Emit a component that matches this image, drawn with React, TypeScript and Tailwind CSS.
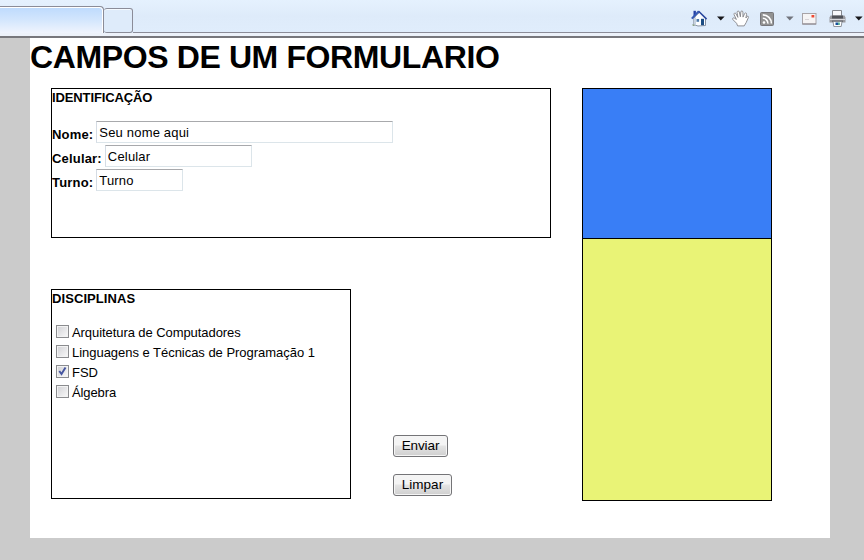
import type { ReactNode } from "react";

function Caret({ color }: { color: string }) {
  return (
    <svg width="8" height="5" viewBox="0 0 8 5" className="shrink-0">
      <path d="M0 0.5h7.6L3.8 4.5z" fill={color} />
    </svg>
  );
}

function HomeIcon() {
  return (
    <svg width="17" height="17" viewBox="0 0 17 17">
      <path d="M2.5 .8h2.4v5H2.5z" fill="#2440a4" />
      <path d="M2.5 9L5 5.5 8.5 2.5 14.5 8.5V15.5L7 16l-4.5-1.5z" fill="#fbfdff" stroke="#7c8798" strokeWidth=".9" />
      <path d="M2.5 9.5L5 7v8.3l-2.5-.8z" fill="#c7d2df" />
      <path d="M.8 8.6L7.8 1.2" fill="none" stroke="#3458b4" strokeWidth="2" />
      <path d="M7.6 1.3l8 7.8" fill="none" stroke="#2a479f" strokeWidth="1.6" />
      <path d="M10 8.8h3V15.2h-3z" fill="#1b4c83" />
      <path d="M5.5 9h2.6v2.8H5.5z" fill="#4c78a8" />
      <path d="M1 14.5h2.5v1.5H2z" fill="#8ca283" />
    </svg>
  );
}

function HandIcon() {
  return (
    <svg width="17" height="17" viewBox="0 0 17 17">
      <path
        d="M5.6 15.9L4.6 13.3 .9 9.6C-.1 8.3 1.3 7.4 2.6 8.2L4.4 9.4 2.1 4.7C1.5 3.2 3.2 2.4 4 3.8L5.9 7.4 5.1 2.4C5 .8 6.9.4 7.3 2L8.4 6.8 8.8 2C9 .5 10.9.6 10.9 2.2L11 7.1 12.6 3.6C13.2 2.3 14.9 2.8 14.6 4.3L13.9 8 15 6.6C15.9 5.6 16.7 6.5 16.4 7.5L14.2 12.5 12.2 15.9z"
        fill="#fff"
        stroke="#838388"
        strokeWidth=".9"
      />
    </svg>
  );
}

function FeedIcon() {
  return (
    <svg width="14" height="14" viewBox="0 0 14 14">
      <rect x=".5" y=".5" width="13" height="13" rx="1" fill="#929292" stroke="#77777b" />
      <circle cx="4" cy="10.5" r="1.3" fill="#fff" />
      <path d="M2.8 6.3a5 5 0 0 1 5.1 5.3M2.8 2.9a8.5 8.5 0 0 1 8.6 8.7" fill="none" stroke="#fff" strokeWidth="1.6" />
    </svg>
  );
}

function MailIcon() {
  return (
    <svg width="15" height="12" viewBox="0 0 15 12">
      <rect x=".5" y=".5" width="13.5" height="10.5" fill="#f5f4f5" stroke="#a8a4a8" />
      <path d="M.5 11h13.5" stroke="#858087" />
      <path d="M9.5 2h2.8v2.5H9.5z" fill="#ef4931" />
      <path d="M3 6.5h4" stroke="#d8d4d8" />
    </svg>
  );
}

function PrinterIcon() {
  return (
    <svg width="17" height="17" viewBox="0 0 17 17">
      <path d="M3.5 6V.5h9V6" fill="#f8f8fb" stroke="#84878d" />
      <path d="M1.5 5.5h14l1 2v5H.5v-5z" fill="#9a9a9f" />
      <path d="M3 5.5h11v3H3z" fill="#505258" />
      <path d="M1 9.5h15" stroke="#d8d8dc" />
      <path d="M3 10.5h11v1.5H3z" fill="#66686e" />
      <path d="M4 11.5h9l-.8 5h-7.4z" fill="#fff" stroke="#777c84" strokeWidth=".8" />
      <path d="M6.5 12.5h2.7v2.5H6.5z" fill="#164e9a" />
      <path d="M9.2 12.5h1.5v2.5H9.2z" fill="#2c9d82" />
    </svg>
  );
}

function Toolbar() {
  return (
    <header className="h-[38px] bg-[#eaf1fb]">
      <div className="flex h-[33px] bg-linear-to-b from-[#e5f1fe] via-[#deebfa] to-[#e0edfc]">
        <div className="mt-1.5 h-[27px] w-[104px] rounded-tr border-t border-r border-[#8b8c98] bg-linear-to-b from-[#bddafd] via-[#d3e6fd] to-[#f0f4fd] shadow-[inset_-1px_1px_0_#fff]" />
        <div className="mt-2 h-[25px] w-[29px] rounded-[3px] border border-l-0 border-[#8b8c98] bg-[#deebfa] shadow-[inset_0_1px_0_#f5faff]" />
        <div className="flex flex-1 items-start border-b border-[#8b8c98]">
          <div className="mt-[10px] ml-auto flex h-[17px] w-[173px] items-center">
            <HomeIcon />
            <span className="ml-[9px] flex"><Caret color="#161619" /></span>
            <span className="ml-[7px] flex"><HandIcon /></span>
            <span className="mt-px ml-[11px] flex"><FeedIcon /></span>
            <span className="ml-3 flex"><Caret color="#71747c" /></span>
            <span className="ml-2 flex"><MailIcon /></span>
            <span className="ml-3 flex"><PrinterIcon /></span>
            <span className="ml-[9px] flex"><Caret color="#161619" /></span>
          </div>
        </div>
      </div>
      <div className="h-[5px] border-b-2 border-b-[#77777c] bg-[#edf2fa]" />
    </header>
  );
}

function Field({ label, value, className }: { label: string; value: string; className: string }) {
  return (
    <label className="flex h-[22px] items-start">
      <span className="mr-[3px] pt-[5px] text-[13px] leading-[18px] font-bold tracking-[.18px]">{label}</span>
      <input
        defaultValue={value}
        className={"h-[22px] border border-[#dce5ea] border-t-[#a8a9ac] border-l-[#d5dce4] bg-white px-[2px] pt-px text-[13px] tracking-[.18px] text-black outline-none " + className}
      />
    </label>
  );
}

function Check({ children, checked = false, className = "" }: { children: ReactNode; checked?: boolean; className?: string }) {
  return (
    <label className="flex h-5 items-start text-[13px] leading-5">
      <span className="mt-[3px] mr-[3px] flex size-[13px] shrink-0 border border-[#8b8c8f] bg-linear-to-br from-[#d1d1d5] to-[#fafafa] shadow-[inset_0_0_0_1px_#f3f3f3]">
        {checked && (
          <svg width="11" height="11" viewBox="0 0 11 11">
            <path d="M2.3 5l2.2 3 4-6.5" fill="none" stroke="#4555a0" strokeWidth="1.9" />
          </svg>
        )}
      </span>
      <span className={"pt-px " + className}>{children}</span>
    </label>
  );
}

function FormButton({ children, className }: { children: ReactNode; className: string }) {
  return (
    <button className={"h-[22px] rounded-[3px] border border-[#747477] bg-linear-to-b from-[#f4f4f4] from-45% via-[#e4e4e4] via-50% to-[#cfcfcf] text-[13.5px] leading-[18px] shadow-[inset_0_0_0_1px_#f5f5f5] " + className}>
      {children}
    </button>
  );
}

export default function App() {
  return (
    <div className="h-[560px] w-[864px] overflow-hidden bg-[#cbcbcb] font-['Liberation_Sans',Arial,sans-serif] text-black">
      <Toolbar />
      <main className="ml-[30px] h-[500px] w-[800px] bg-white">
        <h1 className="h-[50px] text-[32px] leading-[38px] font-bold tracking-[-.38px] whitespace-nowrap">CAMPOS DE UM FORMULARIO</h1>
        <div className="flex pl-[21px]">
          <div className="w-[500px]">
            <section className="h-[150px] border border-black">
              <h2 className="text-[13px] leading-[17px] font-bold tracking-[-.12px]">IDENTIFICAÇÃO</h2>
              <div className="mt-[15px] flex flex-col gap-[2px]">
                <Field label="Nome:" value="Seu nome aqui" className="w-[297px]" />
                <Field label="Celular:" value="Celular" className="w-[147px]" />
                <Field label="Turno:" value="Turno" className="w-[87px]" />
              </div>
            </section>
            <div className="mt-[51px] flex">
              <section className="h-[210px] w-[300px] border border-black">
                <h2 className="text-[13px] leading-[17px] font-bold tracking-[.08px]">DISCIPLINAS</h2>
                <div className="mt-[15px] pl-1">
                  <Check className="tracking-[-.07px]">Arquitetura de Computadores</Check>
                  <Check className="tracking-[-.03px]">Linguagens e Técnicas de Programação 1</Check>
                  <Check checked>FSD</Check>
                  <Check className="tracking-[-.1px]">Álgebra</Check>
                </div>
              </section>
              <div className="ml-[42px] flex flex-col items-start gap-[17px] pt-[146px]">
                <FormButton className="w-[55px] tracking-[-.1px]">Enviar</FormButton>
                <FormButton className="w-[59px]">Limpar</FormButton>
              </div>
            </div>
          </div>
          <aside className="ml-[31px] h-[413px] w-[190px] border border-black">
            <div className="h-[150px] border-b border-black bg-[#397ef6]" />
            <div className="h-[261px] bg-[#e9f376]" />
          </aside>
        </div>
      </main>
    </div>
  );
}
